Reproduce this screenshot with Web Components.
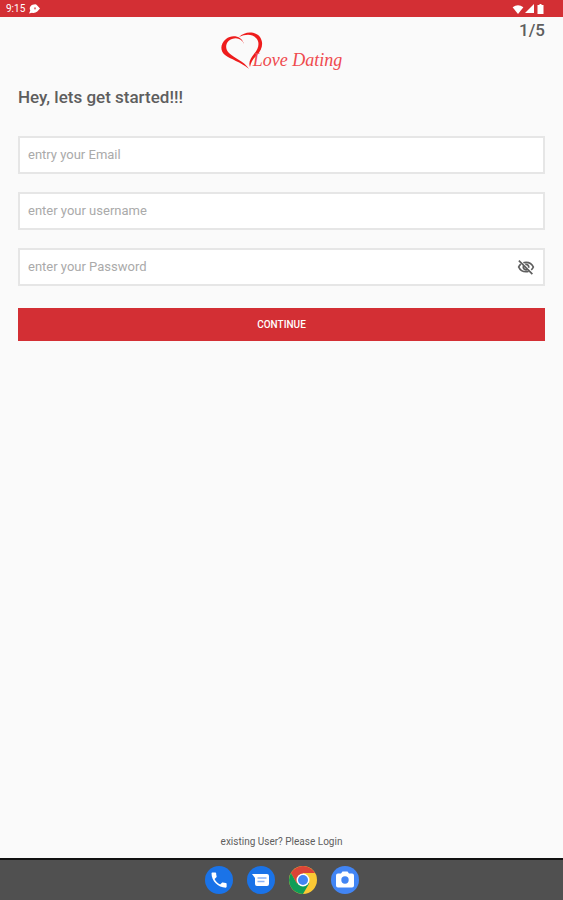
<!DOCTYPE html>
<html lang="en">
<head>
  <meta charset="UTF-8">
  <meta name="viewport" content="width=device-width, initial-scale=1.0">
  <title>Love Dating</title>
  <style>
    html, body {
      height: 100%;
      margin: 0;
    }
    body {
      display: flex;
      flex-direction: column;
      background-color: #fafafa;
      color: #5e5e5e;
      font-family: Roboto, "Liberation Sans", sans-serif;
    }
  </style>
</head>
<body>
  <status-bar time="9:15"></status-bar>
  <signup-page step="1/5">
    <love-logo slot="logo"></love-logo>
    <span slot="title">Hey, lets get started!!!</span>
    <form-field type="email" placeholder="entry your Email"></form-field>
    <form-field type="text" placeholder="enter your username"></form-field>
    <form-field type="password" placeholder="enter your Password"></form-field>
    <red-button>CONTINUE</red-button>
    <login-link slot="footer">existing User? Please Login</login-link>
  </signup-page>
  <app-dock></app-dock>

  <script>
    class StatusBar extends HTMLElement {
      constructor() {
        super();
        this.attachShadow({ mode: 'open' });
      }

      connectedCallback() {
        this.shadowRoot.innerHTML = `
          <style>
            :host {
              display: flex;
              justify-content: space-between;
              align-items: center;
              height: 17px;
              padding: 1px 18px 0 6px;
              box-sizing: border-box;
              flex: none;
              background-color: #d32f34;
              color: #fff;
              font-size: 10px;
              line-height: 16px;
            }
            div {
              display: flex;
              align-items: center;
              gap: 4px;
            }
            .system { gap: 1px; }
            svg { display: block; }
          </style>
          <div>
            <span>${this.getAttribute('time')}</span>
            <svg width="12" height="10" viewBox="0 0 12 10" fill="#fff">
              <path d="M0 9.500 1.300 6.500A4 4 0 0 1 5 .5Q7-.2 8 1.300L11 4.500 8.300 7.500Q6 9.500 3 8.800Z"/>
              <circle cx="6" cy="4.400" r="1.100" fill="#e2787a"/>
            </svg>
          </div>
          <div class="system">
            <svg width="12" height="9" viewBox="0 0 12 10" fill="#fff"><path d="M0 2.500Q6-1.800 12 2.500L6 10Z"/></svg>
            <svg width="10" height="10" viewBox="0 0 10 10" fill="#fff"><path d="M9 0V9H0Z"/></svg>
            <svg width="9" height="10" viewBox="0 0 9 10" fill="#fff"><path d="M3.500 0h2v1H7.500v9h-6V1h2Z"/></svg>
          </div>`;
      }
    }

    class LoveLogo extends HTMLElement {
      constructor() {
        super();
        this.attachShadow({ mode: 'open' });
      }

      connectedCallback() {
        this.shadowRoot.innerHTML = `
          <style>
            :host {
              display: flex;
              align-items: flex-end;
              color: #ef4a4e;
              font: italic 18px/20px "Liberation Serif", serif;
              white-space: nowrap;
            }
            svg { display: block; flex: none; margin-right: -10px; }
          </style>
          <svg width="42" height="38" viewBox="0 0 42 38" fill="#ee1c1c">
            <path d="M23 12C21 4 11 2 5 7C-1 12-1 19 4 23C9 27 20 30 28 37C23 29 13 26 8 21C3 16 5 9 11 7C16 5 21 7 23 12Z"/>
            <path d="M18 5C24-1 34-1 39 5C43 11 41 18 36 23C32 27 30 30 29 35C27 30 30 26 33 22C38 16 39 10 35 6C31 2 25 2 18 5Z"/>
          </svg>
          <span>Love Dating</span>`;
      }
    }

    class SignupPage extends HTMLElement {
      constructor() {
        super();
        this.attachShadow({ mode: 'open' });
      }

      connectedCallback() {
        this.shadowRoot.innerHTML = `
          <style>
            :host {
              display: flex;
              flex-direction: column;
              flex: 1;
              padding: 3px 18px 10px;
            }
            header {
              display: grid;
              grid-template-columns: 1fr auto 1fr;
            }
            .logo {
              grid-column: 2;
              padding-top: 12px;
            }
            .step {
              justify-self: end;
              font-size: 17px;
              line-height: 20px;
              font-weight: 500;
            }
            h1 {
              margin: 17px 0 29px;
              font-size: 17px;
              line-height: 20px;
              font-weight: 500;
            }
            form {
              display: flex;
              flex-direction: column;
              gap: 18px;
            }
            footer {
              margin-top: auto;
              text-align: center;
            }
          </style>
          <header>
            <div class="logo"><slot name="logo"></slot></div>
            <div class="step">${this.getAttribute('step')}</div>
          </header>
          <h1><slot name="title"></slot></h1>
          <form><slot></slot></form>
          <footer><slot name="footer"></slot></footer>`;
      }
    }

    class FormField extends HTMLElement {
      constructor() {
        super();
        this.attachShadow({ mode: 'open' });
      }

      connectedCallback() {
        const type = this.getAttribute('type');
        const text = this.getAttribute('placeholder');
        this.shadowRoot.innerHTML = `
          <style>
            :host {
              display: flex;
              align-items: center;
              height: 38px;
              box-sizing: border-box;
              border: 2px solid #e6e6e6;
              background-color: #fff;
            }
            input {
              flex: 1;
              min-width: 0;
              padding: 0 8px;
              border: 0;
              outline: 0;
              background: none;
              color: #5e5e5e;
              font: 13px/16px Roboto, "Liberation Sans", sans-serif;
            }
            input::placeholder { color: #aaa; opacity: 1; }
            button {
              padding: 0;
              margin-right: 8px;
              border: 0;
              background: none;
            }
            svg { display: block; }
          </style>
          <input type="${type}" placeholder="${text}" aria-label="${text}">
          ${type === 'password' ? this.eyeButton() : ''}`;

        const button = this.shadowRoot.querySelector('button');
        if (button) {
          button.addEventListener('click', () => {
            const input = this.shadowRoot.querySelector('input');
            input.type = input.type === 'password' ? 'text' : 'password';
          });
        }
      }

      eyeButton() {
        return `
          <button type="button" aria-label="Show password">
            <svg width="18" height="18" viewBox="0 0 24 24" fill="none" stroke="#5e5e5e" stroke-width="2.300">
              <path d="M8.500 6.300Q10 5.700 12 5.700C16.500 5.700 20 8 21.800 12Q20.800 14.300 19 15.800M15.500 17.700Q14 18.300 12 18.300C7.500 18.300 4 16 2.200 12Q3.200 9.700 5 8.200"/>
              <path d="M11 8.600A3.600 3.600 0 0 1 15.500 13M13 15.500A3.600 3.600 0 0 1 8.500 11M2.500 3.500 20.500 21.500"/>
            </svg>
          </button>`;
      }
    }

    class RedButton extends HTMLElement {
      constructor() {
        super();
        this.attachShadow({ mode: 'open' });
      }

      connectedCallback() {
        this.shadowRoot.innerHTML = `
          <style>
            :host { display: block; padding-top: 4px; }
            button {
              display: block;
              width: 100%;
              height: 33px;
              padding: 0;
              border: 0;
              background-color: #d32f34;
              color: #fff;
              font: 500 10px/16px Roboto, "Liberation Sans", sans-serif;
            }
          </style>
          <button type="button"><slot></slot></button>`;
      }
    }

    class LoginLink extends HTMLElement {
      constructor() {
        super();
        this.attachShadow({ mode: 'open' });
      }

      connectedCallback() {
        this.shadowRoot.innerHTML = `
          <style>
            :host { display: block; font-size: 10px; line-height: 12px; }
            a { color: inherit; text-decoration: none; }
          </style>
          <a href="#login"><slot></slot></a>`;
      }
    }

    const apps = [
      {
        name: 'Phone',
        icon: `<circle cx="14" cy="14" r="14" fill="#1a73e8"/>
          <path fill="#fff" transform="translate(4 4) scale(.84)" d="M6.620 10.790c1.440 2.830 3.760 5.140 6.590 6.590l2.200-2.200c.27-.27.67-.36 1.020-.24 1.120.37 2.330.57 3.570.57.55 0 1 .45 1 1V20c0 .55-.45 1-1 1-9.390 0-17-7.610-17-17 0-.55.45-1 1-1h3.500c.55 0 1 .45 1 1 0 1.250.2 2.450.57 3.570.11.35.03.74-.25 1.020l-2.200 2.200z"/>`
      },
      {
        name: 'Messages',
        icon: `<circle cx="14" cy="14" r="14" fill="#1a73e8"/>
          <path fill="#fff" d="M5 8H20Q22 8 22 10V18Q22 20 20 20H10Q8 20 8 18V12Z"/>
          <path stroke="#8ab4f8" stroke-width="1.500" d="M10.500 12H19.500M10.500 15.500H17.500"/>`
      },
      {
        name: 'Chrome',
        icon: `<circle cx="14" cy="14" r="14" fill="#fbc934"/>
          <path fill="#db4437" d="M14 14V7H26.120A14 14 0 0 0 1.880 7L7.900 17.500Z"/>
          <path fill="#0f9d58" d="M1.880 7A14 14 0 0 0 14 28L20.100 17.500 14 14 7.900 17.500Z"/>
          <circle cx="14" cy="14" r="6.500" fill="#fff"/>
          <circle cx="14" cy="14" r="5" fill="#4285f4"/>`
      },
      {
        name: 'Camera',
        icon: `<circle cx="14" cy="14" r="14" fill="#4285f4"/>
          <path fill="#fff" d="M10 7.500 11.500 5.500H16.500L18 7.500H21Q23 7.500 23 9.500V19.500Q23 21.500 21 21.500H7Q5 21.500 5 19.500V9.500Q5 7.500 7 7.500Z"/>
          <circle cx="14" cy="14" r="3.700" fill="#4285f4"/>`
      }
    ];

    class AppDock extends HTMLElement {
      constructor() {
        super();
        this.attachShadow({ mode: 'open' });
      }

      connectedCallback() {
        this.shadowRoot.innerHTML = `
          <style>
            :host {
              display: flex;
              justify-content: center;
              align-items: center;
              gap: 14px;
              height: 42px;
              flex: none;
              box-sizing: border-box;
              border-top: 2px solid #111;
              background-color: #505050;
            }
            button {
              padding: 0;
              border: 0;
              background: none;
            }
            svg { display: block; }
          </style>
          ${apps.map(app => `
            <button type="button" aria-label="${app.name}">
              <svg width="28" height="28" viewBox="0 0 28 28">${app.icon}</svg>
            </button>
          `).join('')}`;
      }
    }

    customElements.define('status-bar', StatusBar);
    customElements.define('love-logo', LoveLogo);
    customElements.define('signup-page', SignupPage);
    customElements.define('form-field', FormField);
    customElements.define('red-button', RedButton);
    customElements.define('login-link', LoginLink);
    customElements.define('app-dock', AppDock);
  </script>
</body>
</html>
